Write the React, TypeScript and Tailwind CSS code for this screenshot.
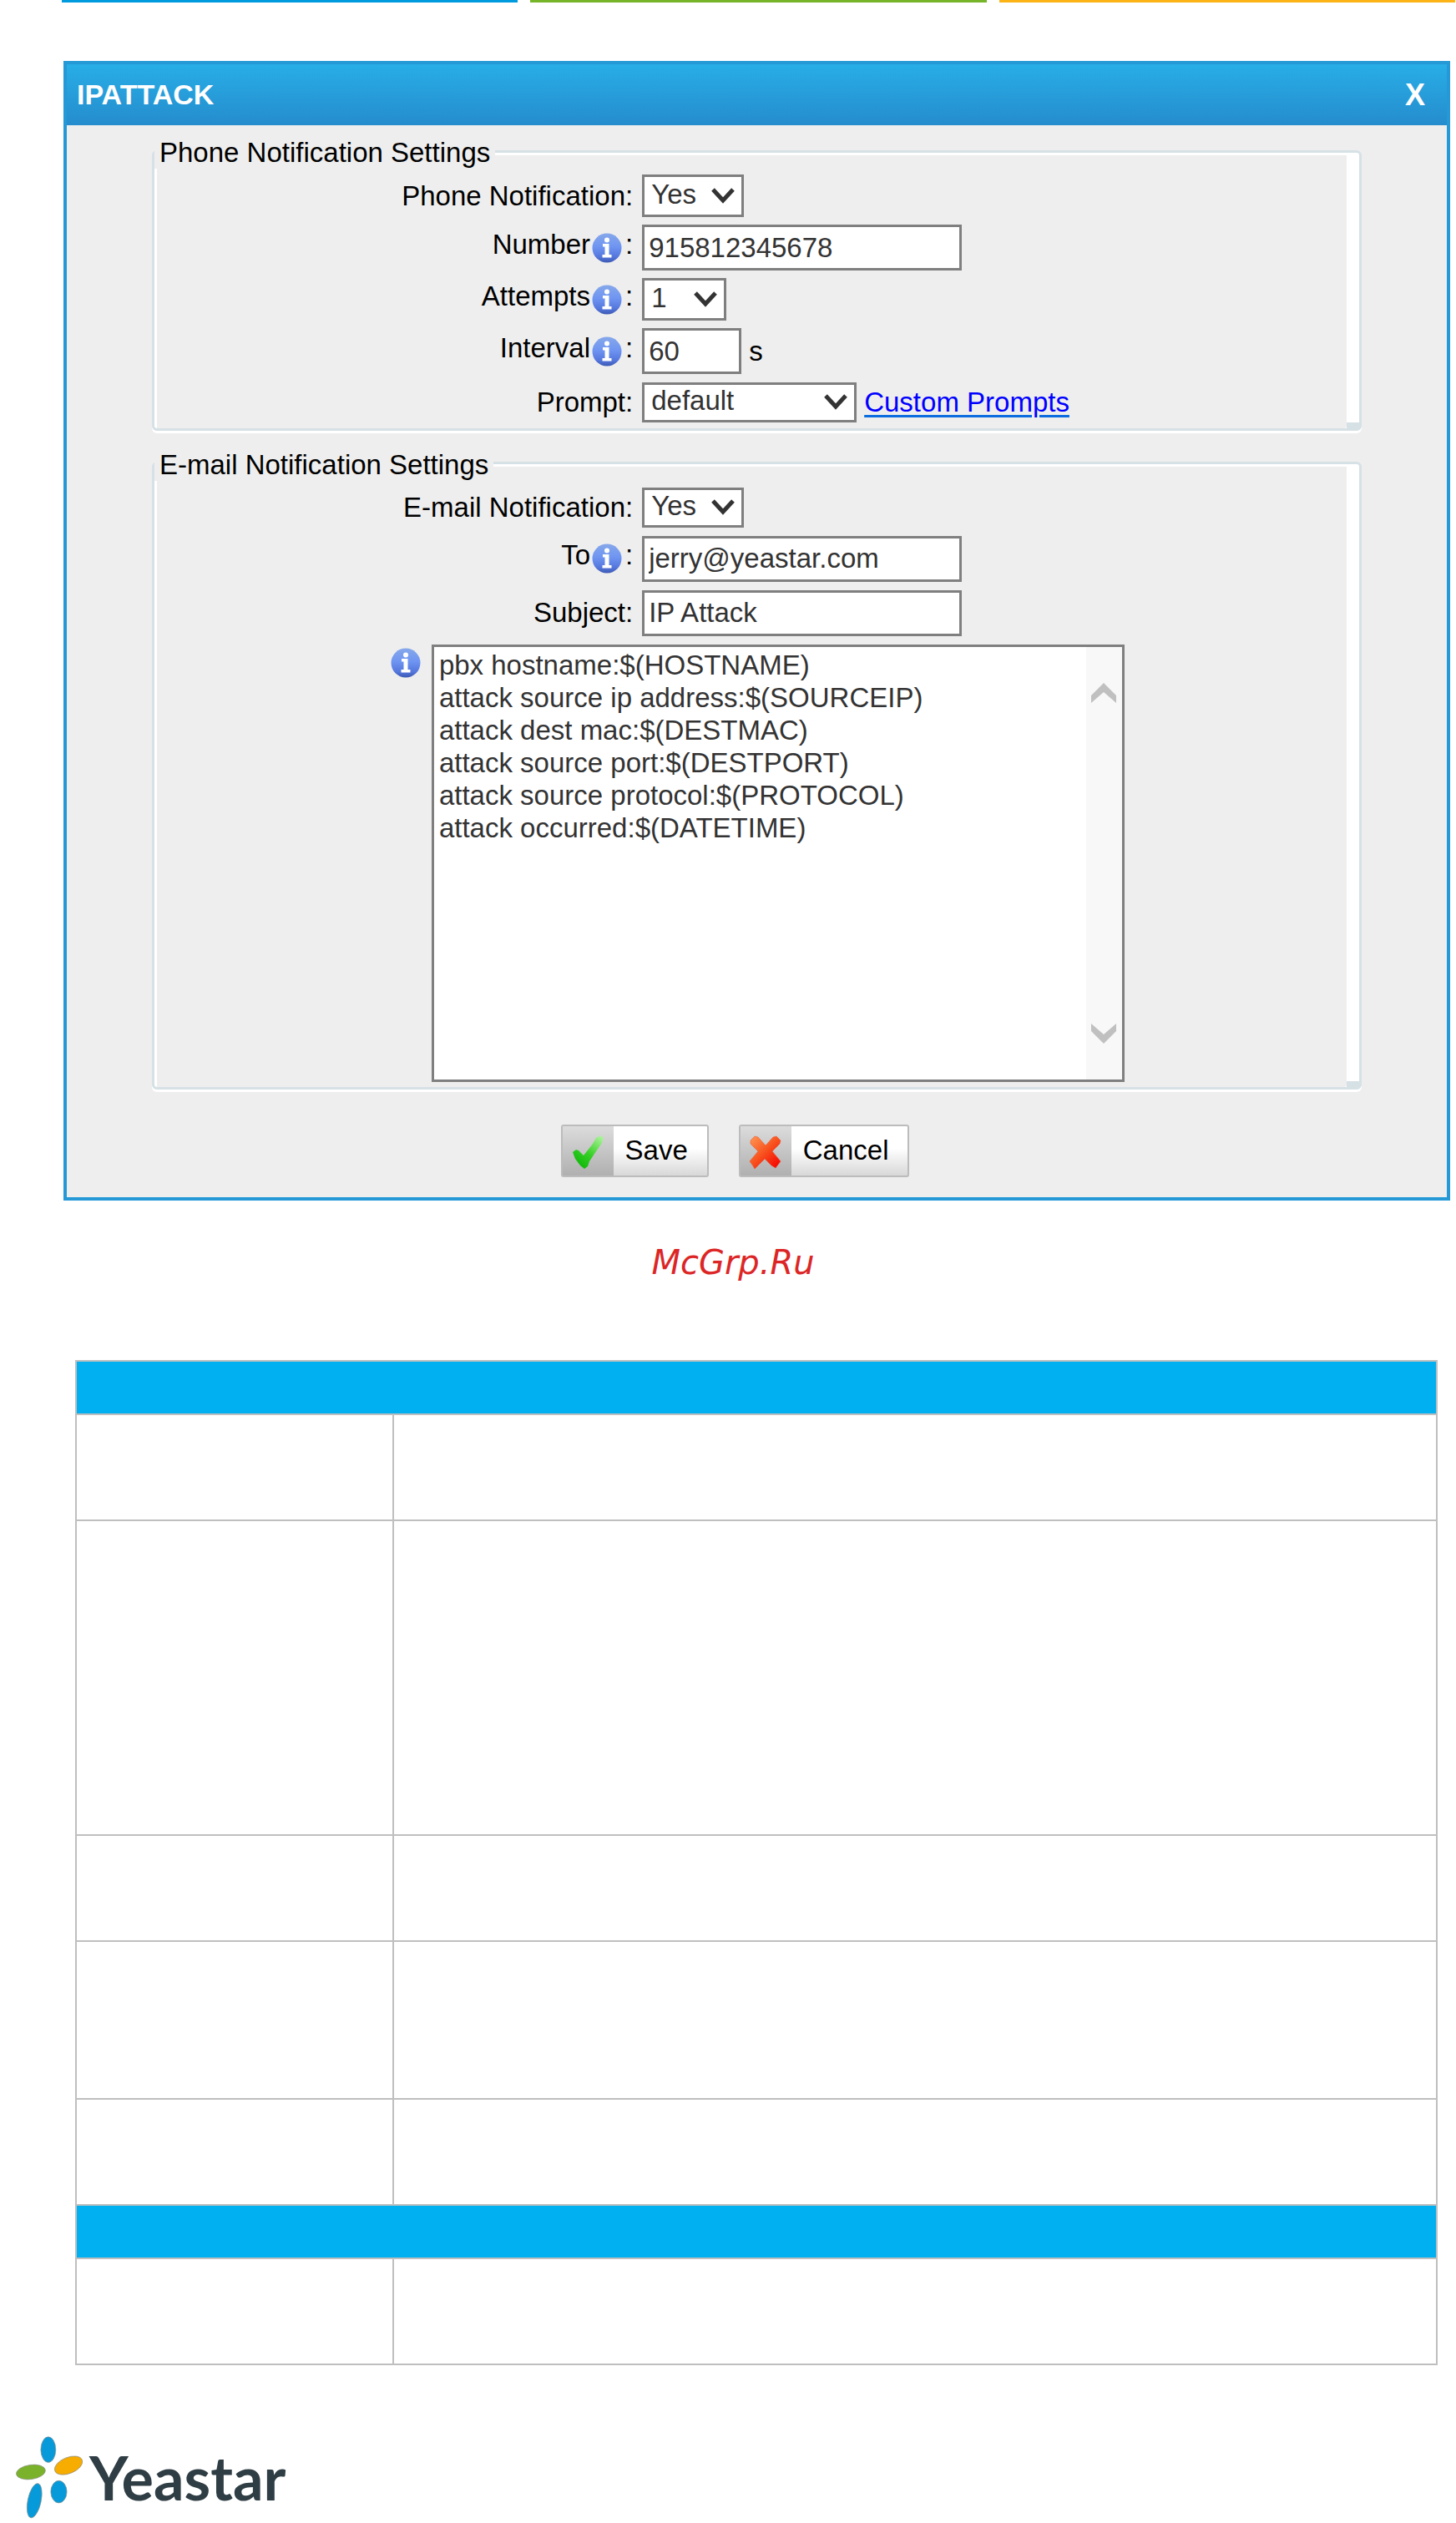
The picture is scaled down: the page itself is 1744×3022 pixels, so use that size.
import type { ReactNode } from "react";
import clsx from "clsx";

const MESSAGE = [
  "pbx hostname:$(HOSTNAME)",
  "attack source ip address:$(SOURCEIP)",
  "attack dest mac:$(DESTMAC)",
  "attack source port:$(DESTPORT)",
  "attack source protocol:$(PROTOCOL)",
  "attack occurred:$(DATETIME)",
].join("\n");

function InfoIcon() {
  return (
    <svg viewBox="0 0 36 36" className="h-9 w-9 shrink-0" aria-hidden="true">
      <defs>
        <linearGradient id="info" x1="0" y1="0" x2="0" y2="1">
          <stop offset="0" stopColor="#86a8ea" />
          <stop offset="0.45" stopColor="#6f95f2" />
          <stop offset="0.8" stopColor="#5577dd" />
          <stop offset="1" stopColor="#3c59b4" />
        </linearGradient>
      </defs>
      <circle cx="18" cy="18" r="17.5" fill="url(#info)" />
      <circle cx="18" cy="8.5" r="3" fill="#fff" />
      <path d="M13 13h7.500v13h3v3.500h-11v-3.500h3v-9.500h-2.500z" fill="#fff" />
    </svg>
  );
}

function Chevron({ up = false }: { up?: boolean }) {
  return (
    <svg viewBox="0 0 30 24" className="h-6 w-[30px]" aria-hidden="true">
      <path
        d={up ? "M0 24v-9L15 0l15 15v9L15 11z" : "M0 0v9l15 15L30 9V0L15 13z"}
        fill="#c0c0c0"
      />
    </svg>
  );
}

function Group({
  title,
  className,
  children,
}: {
  title: string;
  className?: string;
  children: ReactNode;
}) {
  return (
    <fieldset
      className={clsx(
        "relative mx-[102px] flex flex-col rounded-[6px] border-[3px] border-[#d6e1e6]",
        "shadow-[inset_3px_3px_0_#fff,inset_-15px_0_0_#fff,0_3px_0_#fff]",
        className,
      )}
    >
      <legend className="bg-[#eee] px-[6px] pt-1 leading-[38px]">{title}</legend>
      {children}
      <span className="absolute right-0 bottom-0 h-[7px] w-[15px] bg-[#d6e1e6]" />
    </fieldset>
  );
}

function Row({
  id,
  label,
  info = false,
  children,
}: {
  id: string;
  label: string;
  info?: boolean;
  children: ReactNode;
}) {
  return (
    <div className="flex items-center gap-[7px]">
      <label
        htmlFor={id}
        className="flex w-2/5 shrink-0 items-center justify-end pr-1 leading-[38px]"
      >
        {info ? (
          <>
            <span className="pr-[2px] pb-2">{label}</span>
            <InfoIcon />
            <span className="pb-2 pl-1">:</span>
          </>
        ) : (
          `${label}:`
        )}
      </label>
      {children}
    </div>
  );
}

function Select({
  id,
  options,
  className,
}: {
  id: string;
  options: string[];
  className: string;
}) {
  return (
    <span className={clsx("relative block", className)}>
      <select
        id={id}
        className="block h-full w-full appearance-none border-[3px] border-[#7f7f7f] bg-white pb-1 pl-2 leading-[38px] text-[#333]"
      >
        {options.map((o) => (
          <option key={o}>{o}</option>
        ))}
      </select>
      <svg
        viewBox="0 0 28 20"
        className="pointer-events-none absolute top-1/2 right-[11px] h-5 w-7 -translate-y-1/2"
        aria-hidden="true"
      >
        <path d="M2 2l12 13L26 2" fill="none" stroke="#333" strokeWidth="5" />
      </svg>
    </span>
  );
}

function TextInput({
  id,
  value,
  className,
}: {
  id: string;
  value: string;
  className: string;
}) {
  return (
    <input
      id={id}
      type="text"
      defaultValue={value}
      className={clsx(
        "h-[55px] border-[3px] border-[#7f7f7f] bg-white px-[5px] text-[#333]",
        className,
      )}
    />
  );
}

function ActionButton({ icon, children }: { icon: ReactNode; children: ReactNode }) {
  return (
    <button
      type="button"
      className="flex h-[63px] items-stretch rounded-[3px] border-2 border-[#bcbcbc] bg-linear-to-b from-white from-45% to-[#d8d8d8]"
    >
      <span className="flex w-[61px] items-center justify-center bg-linear-to-b from-[#dcdcdc] to-[#b0b0b0] pt-1">
        {icon}
      </span>
      <span className="self-center pr-[23px] pl-[14px]">{children}</span>
    </button>
  );
}

function CheckIcon() {
  return (
    <svg viewBox="0 0 37 40" className="h-10 w-[37px]" aria-hidden="true">
      <defs>
        <linearGradient id="check" x1="1" y1="0" x2="0.3" y2="1">
          <stop offset="0" stopColor="#b9f7a8" />
          <stop offset="0.6" stopColor="#35cf24" />
          <stop offset="1" stopColor="#0fb80a" />
        </linearGradient>
      </defs>
      <path
        d="M0 20l4-3 3 1 6 6L24 10l4-7 5-3 4 3-2 6-9 13-6 9-2 6-4 3-5-4L3 28z"
        fill="url(#check)"
      />
    </svg>
  );
}

function CrossIcon() {
  return (
    <svg viewBox="0 0 40 40" className="h-10 w-10" aria-hidden="true">
      <defs>
        <linearGradient id="cross" x1="0" y1="0" x2="0.9" y2="1">
          <stop offset="0" stopColor="#ff9a55" />
          <stop offset="0.5" stopColor="#f8531f" />
          <stop offset="1" stopColor="#f60000" />
        </linearGradient>
      </defs>
      <path
        d="M2 6l5-5 4 1 9 10 9-10 4-1 5 5-1 4-9 9 10 12-3 4-3 4-5-3-8-8-9 9-3 3-3-5-3-4 10-12-9-9z"
        fill="url(#cross)"
        stroke="#e8502c"
        strokeOpacity="0.5"
      />
    </svg>
  );
}

function Dialog() {
  return (
    <form className="border-4 border-[#2499d6] bg-[#eee] font-['Liberation_Sans',Arial,sans-serif] text-[33px] text-black">
      <header className="flex h-[73px] items-center justify-between bg-linear-to-b from-[#28aee7] to-[#258ccd] pr-[26px] pl-3 font-bold text-white">
        <h1 className="text-[34px]">IPATTACK</h1>
        <button type="button" className="text-[36px]">
          X
        </button>
      </header>

      <div className="pt-[10px] pb-6">
        <Group title="Phone Notification Settings" className="gap-[9px] pt-[7px] pb-[6px]">
          <Row id="phone" label="Phone Notification">
            <Select id="phone" options={["Yes", "No"]} className="h-[51px] w-[122px]" />
          </Row>
          <Row id="number" label="Number" info>
            <TextInput id="number" value="915812345678" className="w-[383px]" />
          </Row>
          <Row id="attempts" label="Attempts" info>
            <Select id="attempts" options={["1", "2", "3"]} className="h-[51px] w-[101px]" />
          </Row>
          <Row id="interval" label="Interval" info>
            <TextInput id="interval" value="60" className="w-[119px]" />
            <span className="pl-[2px]">s</span>
          </Row>
          <Row id="prompt" label="Prompt">
            <Select id="prompt" options={["default"]} className="h-12 w-[257px]" />
            <a
              href="#prompts"
              className="pl-[2px] text-[#0000ff] underline decoration-[#0a6ce0] decoration-[3px] underline-offset-4"
            >
              Custom Prompts
            </a>
          </Row>
        </Group>

        <Group
          title="E-mail Notification Settings"
          className="mt-[18px] gap-[10px] pt-2 pb-[6px]"
        >
          <Row id="email" label="E-mail Notification">
            <Select id="email" options={["Yes", "No"]} className="h-12 w-[122px]" />
          </Row>
          <Row id="to" label="To" info>
            <TextInput id="to" value="jerry@yeastar.com" className="w-[383px]" />
          </Row>
          <Row id="subject" label="Subject">
            <TextInput id="subject" value="IP Attack" className="w-[383px]" />
          </Row>
          <div className="flex items-start">
            <label
              htmlFor="message"
              aria-label="Message"
              className="flex w-[23%] justify-end pt-1 pr-[13px]"
            >
              <InfoIcon />
            </label>
            <div className="flex h-[524px] w-[830px] border-[3px] border-[#7f7f7f] bg-white">
              <textarea
                id="message"
                defaultValue={MESSAGE}
                className="min-w-0 flex-1 resize-none overflow-hidden px-[6px] pt-[2px] leading-[39px] text-[#333]"
              />
              <div className="flex w-[43px] flex-col items-center justify-between bg-[#f8f8f8] py-[43px]">
                <Chevron up />
                <Chevron />
              </div>
            </div>
          </div>
        </Group>

        <div className="mt-[42px] flex justify-center gap-9 pr-[52px]">
          <ActionButton icon={<CheckIcon />}>Save</ActionButton>
          <ActionButton icon={<CrossIcon />}>Cancel</ActionButton>
        </div>
      </div>
    </form>
  );
}

function HeadingRow() {
  return (
    <tr className="h-16">
      <th colSpan={2} className="border-2 border-[#bfbfbf] bg-[#01b0f1]" />
    </tr>
  );
}

function BlankRow({ className }: { className: string }) {
  return (
    <tr className={className}>
      <td className="border-2 border-[#bfbfbf]" />
      <td className="border-2 border-[#bfbfbf]" />
    </tr>
  );
}

function Logo() {
  return (
    <svg viewBox="50 110 250 300" className="h-[100px] w-[83px]" aria-hidden="true">
      <g stroke="#8a8f86" strokeWidth="2">
        <ellipse cx="173" cy="161" rx="27" ry="46" fill="#069adb" />
        <ellipse cx="110" cy="242" rx="53" ry="26" fill="#7ab22b" transform="rotate(-8 110 242)" />
        <ellipse cx="246" cy="218" rx="53" ry="29" fill="#f7ac00" transform="rotate(-22 246 218)" />
        <ellipse cx="211" cy="313" rx="29" ry="40" fill="#069adb" />
        <ellipse cx="123" cy="345" rx="24" ry="63" fill="#069adb" transform="rotate(12 123 345)" />
      </g>
    </svg>
  );
}

export default function App() {
  return (
    <div className="bg-white">
      <div className="flex gap-[15px] pr-px pl-[74px]">
        <div className="h-[3px] flex-1 bg-[#009bde]" />
        <div className="h-[3px] flex-1 bg-[#76b52a]" />
        <div className="h-[3px] flex-1 bg-[#fbb316]" />
      </div>

      <main>
        <div className="mt-[70px] mr-[7px] ml-[76px]">
          <Dialog />
        </div>

        <p className="mt-[50px] pl-3 text-center font-['DejaVu_Sans',sans-serif] text-[40px] leading-[48px] text-[#dc2626] italic">
          McGrp.Ru
        </p>

        <div className="mt-[93px] mr-[22px] ml-[90px]">
          <table className="w-full table-fixed border-collapse">
            <colgroup>
              <col className="w-[380px]" />
              <col />
            </colgroup>
            <tbody>
              <HeadingRow />
              <BlankRow className="h-[127px]" />
              <BlankRow className="h-[377px]" />
              <BlankRow className="h-[127px]" />
              <BlankRow className="h-[189px]" />
              <BlankRow className="h-[127px]" />
              <HeadingRow />
              <BlankRow className="h-[127px]" />
            </tbody>
          </table>
        </div>
      </main>

      <footer className="mt-[84px] flex items-center gap-[7px] pl-[17px]">
        <Logo />
        <span className="font-['Lato',sans-serif] text-[72px] leading-[80px] font-bold text-[#2f3d44]">
          Yeastar
        </span>
      </footer>
    </div>
  );
}
